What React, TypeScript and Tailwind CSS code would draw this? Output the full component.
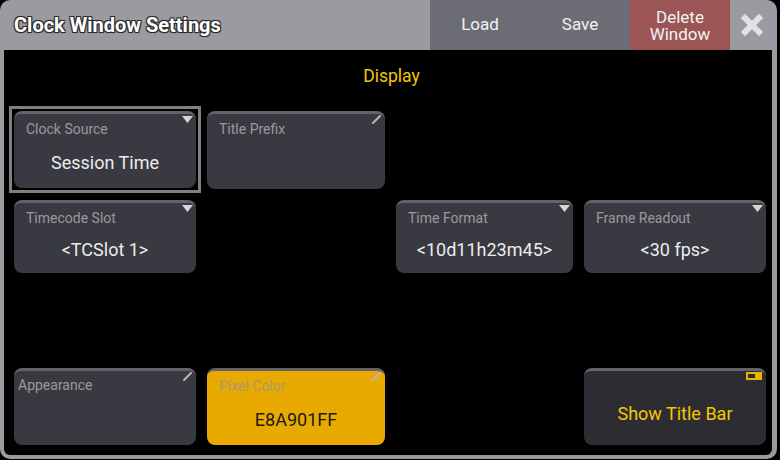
import React from 'react';

type Corner = 'drop' | 'edit' | 'toggle';

interface CardProps {
  label?: string;
  value?: string;
  corner: Corner;
  variant?: 'default' | 'color' | 'button';
  selected?: boolean;
  labelClass?: string;
}

const CornerMark: React.FC<{ kind: Corner }> = ({ kind }) => {
  if (kind === 'drop') {
    return (
      <svg className="absolute right-[3px] top-[2px]" width="11" height="7" viewBox="0 0 11 7">
        <polygon points="0,0 11,0 5.5,7" fill="#d4d4d8" />
      </svg>
    );
  }
  if (kind === 'edit') {
    return (
      <svg className="absolute right-[4px] top-[1px]" width="9" height="9" viewBox="0 0 9 9">
        <line x1="1" y1="8" x2="8" y2="1" stroke="#b8b8bc" strokeWidth="2" strokeLinecap="round" />
      </svg>
    );
  }
  return (
    <div className="absolute right-[4px] top-[1px] flex h-[8px] w-[16px] items-center border border-[#e8b400] bg-[#e8b400] p-px">
      <div className="h-full w-[7px] bg-[#2c2c32]" />
    </div>
  );
};

const Card: React.FC<CardProps> = ({ label, value, corner, variant = 'default', selected, labelClass = 'left-[12px] top-[6px]' }) => {
  const bg =
    variant === 'color' ? 'bg-[#e8a901]' : variant === 'button' ? 'bg-[#2c2c32]' : 'bg-[#393941]';
  const card = (
    <div className={`relative h-full w-full overflow-hidden rounded-[8px] border-t-[3px] border-[#626268] ${bg}`}>
      <CornerMark kind={corner} />
      {label && (
        <div
          className={`absolute text-[14px] leading-[18px] ${labelClass} ${
            variant === 'color' ? 'text-[#a89a70]' : 'text-[#9a9a9e]'
          }`}
        >
          {label}
        </div>
      )}
      {value && (
        <div
          className={`flex h-full w-full items-center justify-center ${
            variant === 'button'
              ? 'pt-[10px] text-[18px] text-[#f4c800]'
              : variant === 'color'
                ? 'pt-[22px] text-[18px] text-[#1c1a14]'
                : 'pt-[23px] text-[18px] text-[#ececec]'
          }`}
        >
          {value}
        </div>
      )}
    </div>
  );
  if (selected) {
    return <div className="-m-[5px] h-[calc(100%+9px)] border-[3px] border-[#808080] p-[2px]">{card}</div>;
  }
  return card;
};

export default function App() {
  return (
    <div className="h-[460px] w-[780px] bg-black font-['Roboto','Liberation_Sans',sans-serif]">
      <div className="flex h-[459px] w-[777px] flex-col overflow-hidden rounded-[10px] bg-[#9a9aa0]">
        {/* title bar */}
        <div className="flex h-[50px] shrink-0 items-stretch">
          <div className="flex flex-1 items-center pl-[14px] text-[20px] font-bold text-white [text-shadow:1px_1px_0_#2a2a2a,-1px_-1px_0_#2a2a2a,1px_-1px_0_#2a2a2a,-1px_1px_0_#2a2a2a,0_0_2px_#2a2a2a]">
            Clock Window Settings
          </div>
          <button className="w-[100px] bg-[#6c6d74] text-[17px] text-[#f2f2f2]">Load</button>
          <button className="w-[100px] bg-[#6c6d74] text-[17px] text-[#f2f2f2]">Save</button>
          <button className="flex w-[100px] flex-col items-center justify-center bg-[#9b5555] pt-px text-[17px] leading-[17px] text-[#f2f2f2]">
            <span>Delete</span>
            <span>Window</span>
          </button>
          <div className="flex w-[47px] items-center justify-center pr-[4px]">
            <svg width="24" height="24" viewBox="0 0 24 24">
              <path d="M5 5 L19 19 M19 5 L5 19" stroke="#e2e2e2" strokeWidth="6" strokeLinecap="square" />
            </svg>
          </div>
        </div>
        {/* content */}
        <div className="mb-[4px] ml-[4px] mr-[5px] flex flex-1 flex-col rounded-b-[6px] bg-black pl-[10px] pr-[3px]">
          <div className="flex h-[61px] shrink-0 items-center justify-center pb-[9px] text-[17.5px] text-[#f4c800]">
            Display
          </div>
          <div className="grid grid-cols-[182px_178px_177px_182px] grid-rows-[78px_73px_73px_77px] gap-x-[11px] gap-y-[11px]">
            <Card label="Clock Source" value="Session Time" corner="drop" selected />
            <Card label="Title Prefix" corner="edit" />
            <div />
            <div />
            <Card label="Timecode Slot" value="<TCSlot 1>" corner="drop" />
            <div />
            <Card label="Time Format" value="<10d11h23m45>" corner="drop" />
            <Card label="Frame Readout" value="<30 fps>" corner="drop" />
            <div />
            <div />
            <div />
            <div />
            <Card label="Appearance" corner="edit" labelClass="left-[4px] top-[5px]" />
            <Card label="Pixel Color" value="E8A901FF" corner="edit" variant="color" />
            <div />
            <Card value="Show Title Bar" corner="toggle" variant="button" />
          </div>
        </div>
      </div>
    </div>
  );
}
